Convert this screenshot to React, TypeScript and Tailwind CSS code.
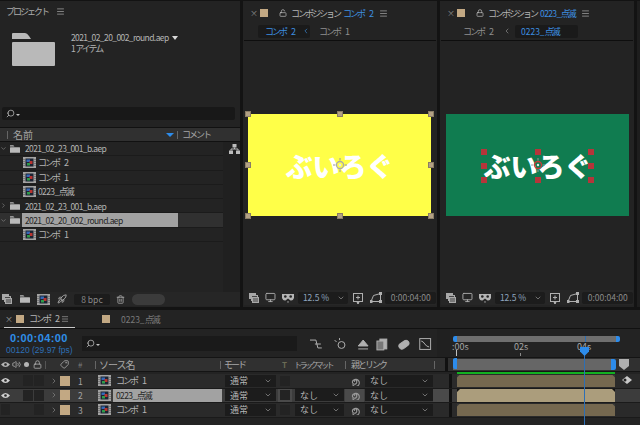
import React from "react";
import { ChevronDown, ChevronRight, ChevronLeft, Lock, LockOpen, Rocket, Trash2, Tag, Volume2, Menu, Search, Monitor } from "lucide-react";

const Jp = ({ children, className = "" }: { children: React.ReactNode; className?: string }) => (
  <span className={"text-[9px] tracking-[-2px] leading-none whitespace-pre " + className}>{children}</span>
);
const Lat = ({ children, className = "" }: { children: React.ReactNode; className?: string }) => (
  <span className={"text-[8.5px] tracking-[-0.6px] leading-none whitespace-nowrap " + className}>{children}</span>
);

const CompIcon = () => (
  <svg width="13" height="11" viewBox="0 0 13 11" className="shrink-0">
    <rect width="13" height="11" fill="#a3a3a3" />
    <rect x="2.500" y="1.500" width="8" height="8" fill="#1c2433" />
    <rect x="3.500" y="2.500" width="3.500" height="2.500" fill="#3568b8" />
    <rect x="6.500" y="4" width="3" height="3" fill="#b8332f" />
    <rect x="4" y="6" width="3" height="2.500" fill="#2f9a4a" />
    <path d="M1 2v7M12 2v7" stroke="#555" strokeDasharray="1 1" />
  </svg>
);
const Folder = ({ w = 10, h = 8 }: { w?: number; h?: number }) => (
  <svg width={w} height={h} viewBox="0 0 43 33" className="shrink-0">
    <path d="M0 1q0-1 1-1h12q2 0 4 3l2 3H0z" fill="#b9b9b9" />
    <rect x="0" y="9" width="43" height="24" rx="1" fill="#b9b9b9" />
  </svg>
);
const Flow = () => (
  <svg width="11" height="10" viewBox="0 0 11 10">
    <rect x="3.500" y="0" width="4" height="3.500" fill="#bdbdbd" />
    <rect x="0" y="6.500" width="4" height="3.500" fill="#bdbdbd" />
    <rect x="7" y="6.500" width="4" height="3.500" fill="#bdbdbd" />
    <path d="M5.500 3.500v1.500M2 6.500V5h7v1.500" stroke="#bdbdbd" fill="none" />
  </svg>
);
const Spiral = () => (
  <svg width="10" height="10" viewBox="0 0 10 10" fill="none" stroke="#9a9a9a" strokeWidth="1.100">
    <path d="M5 5.500a1 1 0 1 1 1.200-1a2.200 2.200 0 1 1-2.700-.4a3.600 3.600 0 1 1 -1 4.500" />
  </svg>
);
const FilledEye = ({ color = "#d0d0d0" }: { color?: string }) => (
  <svg width="9" height="7" viewBox="0 0 9 7" className="shrink-0">
    <path d="M0 3.500Q4.500-1.500 9 3.500 4.500 8.500 0 3.500z" fill={color} />
    <circle cx="4.500" cy="3.500" r="1.300" fill="#2a2a2a" />
  </svg>
);
const Grid2 = () => (
  <svg width="10" height="10" viewBox="0 0 10 10" fill="none" stroke="#a8a8a8" className="shrink-0">
    <rect x="0.500" y="0.500" width="6" height="5" fill="#a8a8a8" />
    <rect x="2.500" y="2.500" width="6" height="5" fill="#444" />
    <rect x="3.500" y="4.500" width="6" height="5" fill="#777" />
  </svg>
);
const Mask = () => (
  <svg width="14" height="10" viewBox="0 0 14 10" fill="#b5b5b5">
    <path d="M1 1h12v4q-1 3-3.500 2.500L7 5.500 4.500 7.500Q2 8 1 5z" />
    <circle cx="4.300" cy="3.500" r="1.300" fill="#232323" />
    <circle cx="9.700" cy="3.500" r="1.300" fill="#232323" />
    <path d="M6 8.500h2L7 10z" />
  </svg>
);
const Target = () => (
  <svg width="12" height="12" viewBox="0 0 12 12" fill="none" stroke="#b0b0b0">
    <rect x="1.500" y="1.500" width="9" height="8" />
    <path d="M6 3.500v4M4 5.500h4" />
    <path d="M5 10.500h2L6 12z" fill="#b0b0b0" />
  </svg>
);
const Persp = () => (
  <svg width="12" height="11" viewBox="0 0 12 11" fill="none" stroke="#b0b0b0">
    <path d="M1 9.500 3.500 3.500 10.500 1.500v8z" />
    <rect x="0" y="8.500" width="2" height="2" fill="#b0b0b0" />
    <rect x="9.500" y="0.500" width="2" height="2" fill="#b0b0b0" />
    <rect x="9.500" y="8.500" width="2" height="2" fill="#b0b0b0" />
  </svg>
);
const SearchDrop = () => (
  <div className="flex items-center gap-[1px]">
    <Search size={9} className="text-[#c0c0c0] -scale-x-100" />
    <div className="mt-[3px] w-0 h-0 border-l-[2px] border-r-[2px] border-t-[2px] border-l-transparent border-r-transparent border-t-[#c0c0c0]" />
  </div>
);

const TanSquare = ({ size = "w-2 h-2" }: { size?: string }) => <div className={"bg-[#c2a883] shrink-0 " + size} />;

const ProjectRow = ({ chevron, folder, children, selected }: { chevron?: "down" | "right"; folder?: boolean; children: React.ReactNode; selected?: boolean }) => (
  <div className={"h-[14.300px] flex items-center border-b border-[#1b1b1b] " + (selected ? "bg-[#303030]" : "")}>
    <div className="w-[10px] flex justify-start shrink-0">
      {chevron === "down" && <ChevronDown size={7} className="text-[#8f8f8f]" />}
      {chevron === "right" && <ChevronRight size={7} className="text-[#8f8f8f]" />}
    </div>
    {folder ? <div className="flex items-center"><Folder /><div className="w-[5px]" /></div> : <div className="flex items-center pl-[13px] gap-[2px]"><CompIcon /></div>}
    {children}
  </div>
);

const ProjectPanel = () => (
  <div className="w-[240px] bg-[#232323] flex flex-col">
    <div className="h-[19px] flex items-center pl-[6px] gap-[8px] pt-[2px]">
      <Jp className="text-[#ababab]">プロジェクト</Jp>
      <Menu size={9} className="text-[#a0a0a0]" />
    </div>
    <div className="h-[87px] flex pl-[12px] pt-[13px]">
      <Folder w={43} h={33} />
      <div className="ml-[16px] flex flex-col gap-[2px]">
        <div className="flex items-center gap-[3px] h-[9px]">
          <Lat className="text-[#b4b4b4]">2021_02_20_002_round.aep</Lat>
          <div className="w-0 h-0 border-l-[3px] border-r-[3px] border-t-[4px] border-l-transparent border-r-transparent border-t-[#d8d8d8]" />
        </div>
        <div className="h-[9px] flex items-center">
          <Lat className="text-[#b4b4b4]">1</Lat>
          <Jp className="text-[#b4b4b4]">アイテム</Jp>
        </div>
      </div>
    </div>
    <div className="h-[13px] mx-[2px] w-[233px] bg-[#181818] rounded-[2px] flex items-center pl-[4px]">
      <SearchDrop />
    </div>
    <div className="h-[7px]" />
    <div className="h-[15px] bg-[#303030] border-y border-[#111] flex items-center">
      <div className="w-[8px] h-[8px] border-r border-[#666]" />
      <span className="ml-[5px] text-[10px] text-[#a5a5a5] leading-none w-[153px]">名前</span>
      <div className="w-0 h-0 border-l-[4px] border-r-[4px] border-t-[4px] border-l-transparent border-r-transparent border-t-[#2d8ceb]" />
      <div className="ml-[3px] w-px h-[8px] bg-[#666]" />
      <Jp className="ml-[4px] text-[#a5a5a5]">コメント</Jp>
    </div>
    <div className="flex flex-1">
      <div className="w-[226px] flex flex-col">
        <ProjectRow chevron="down" folder><Lat className="text-[#b4b4b4]">2021_02_23_001_b.aep</Lat></ProjectRow>
        <ProjectRow><Jp className="ml-[2px] text-[#b4b4b4]">{"コンポ\u2002\u20022"}</Jp></ProjectRow>
        <ProjectRow><Jp className="ml-[2px] text-[#b4b4b4]">{"コンポ\u2002\u20021"}</Jp></ProjectRow>
        <ProjectRow><Lat className="ml-[2px] text-[#b4b4b4]">0223_</Lat><Jp className="text-[#b4b4b4]">点滅</Jp></ProjectRow>
        <ProjectRow chevron="right" folder><Lat className="text-[#b4b4b4]">2021_02_23_001_b.aep</Lat></ProjectRow>
        <ProjectRow chevron="down" selected folder>
          <div className="-ml-[3px] w-[156px] h-[14px] bg-[#a2a2a2] flex items-center pl-[3px]"><Lat className="text-[#262626]">2021_02_20_002_round.aep</Lat></div>
        </ProjectRow>
        <ProjectRow><Jp className="ml-[2px] text-[#b4b4b4]">{"コンポ\u2002\u20021"}</Jp></ProjectRow>
      </div>
      <div className="flex-1 bg-[#202020] pl-[6px] pt-[2px]"><Flow /></div>
    </div>
    <div className="h-[14px] mb-[1px] bg-[#262626] flex items-center">
      <div className="w-[12px] overflow-hidden flex justify-end"><Grid2 /></div>
      <div className="w-[8px]" />
      <Folder w={10} h={8} />
      <div className="w-[7px]" />
      <CompIcon />
      <div className="w-[7px]" />
      <Rocket size={10} className="text-[#b5b5b5]" />
      <div className="ml-[7px] w-[36px] h-[11px] bg-[#1c1c1c] rounded-[2px] flex items-center justify-center"><Lat className="text-[#8a8a8a] tracking-normal">8 bpc</Lat></div>
      <Trash2 size={9} className="ml-[6px] text-[#b0b0b0]" />
      <div className="ml-[7px] w-[33px] h-[11px] bg-[#3b3b3b] rounded-full" />
    </div>
  </div>
);

const CompPanel = ({ locked, title, crumb, children, wide }: { locked?: boolean; title: React.ReactNode; crumb: React.ReactNode; children: React.ReactNode; wide?: boolean }) => (
  <div className="w-[194px] bg-[#232323] flex flex-col shrink-0">
    <div className="h-[22px] flex items-center pl-[7px] pt-[2px]">
      <span className="text-[8px] leading-none text-[#8a8a8a] w-[10px]">×</span>
      <TanSquare size="w-[8px] h-[8px]" />
      <div className="ml-[11px] w-[8px] flex justify-center">
        {locked ? <Lock size={8} className="text-[#c4c4c4]" /> : <LockOpen size={8} className="text-[#c4c4c4]" />}
      </div>
      <Jp className="ml-[4px] text-[#b4b4b4]">コンポジション</Jp>
      <div className="ml-[3px] flex items-center">{title}</div>
      <Menu size={9} className={(wide ? "ml-[6px]" : "ml-[7px]") + " text-[#a0a0a0]"} />
    </div>
    <div className="h-[17px] flex items-center pb-[1px]">{crumb}</div>
    <div className="h-px bg-[#0e0e0e] mx-[1px]" />
    {children}
    <div className="h-[15px] mx-[1px] mb-[2px] mt-auto bg-[#262626] flex items-center pl-[5px]">
      <Grid2 />
      <Monitor size={11} className="ml-[6px] text-[#b0b0b0]" />
      <div className="ml-[5px]"><Mask /></div>
      <div className="ml-[3px] w-[51px] h-[12px] bg-[#1c1c1c] rounded-[2px] flex items-center pl-[5px] pr-[3px] justify-between">
        <Lat className="text-[#8fa6bf] tracking-normal">12.5 %</Lat>
        <ChevronDown size={8} className="text-[#999]" />
      </div>
      <div className="ml-[4px]"><Target /></div>
      <div className="ml-[6px]"><Persp /></div>
      <div className="ml-[3px] w-[51px] h-[12px] bg-[#1c1c1c] rounded-[2px] flex items-center justify-center"><Lat className="text-[#8a8a8a] tracking-normal">0:00:04:00</Lat></div>
    </div>
  </div>
);

const Anchor = ({ cross }: { cross: string }) => (
  <svg width="14" height="14" viewBox="0 0 14 14" className="absolute left-1/2 top-1/2 -translate-x-1/2 -translate-y-1/2" fill="none" stroke={cross}>
    <circle cx="7" cy="7" r="3.500" strokeWidth="1.300" />
    <circle cx="7" cy="7" r="1.200" fill="#e8e8e8" stroke="none" />
    <path d="M7 0v2.500M7 11.500V14M0 7h2.500M11.500 7H14" stroke="#9a9a9a" />
  </svg>
);
const Comp = ({ bg, cross }: { bg: string; cross: string }) => (
  <div className={"relative w-[183px] h-[102px] flex items-center justify-center " + bg}>
    <span className="text-[27px] font-black text-white leading-none whitespace-nowrap">ぶいろぐ</span>
    <Anchor cross={cross} />
  </div>
);
const Handles = ({ cls, xs, ys }: { cls: string; xs: string[]; ys: string[] }) => (
  <>
    {ys.map((y, j) => xs.map((x, i) => (j === 1 && i === 1 ? null : <div key={x + y} className={"absolute w-[6px] h-[6px] -translate-x-1/2 -translate-y-1/2 " + cls} style={{ left: x, top: y }} />)))}
  </>
);

const SelectBox = ({ w, label }: { w: string; label: string }) => (
  <div className={"h-[12px] bg-[#1c1c1c] flex items-center justify-between pl-[5px] pr-[4px] shrink-0 " + w}>
    <span className="text-[9px] leading-none text-[#b4b4b4]">{label}</span>
    <ChevronDown size={8} className="text-[#9a9a9a]" />
  </div>
);

const Bar = ({ cls, mark }: { cls: string; mark: string }) => (
  <div className={"relative w-[158px] h-[12.500px] shrink-0 " + cls}>
    <div className={"absolute left-0 top-0 w-[3px] h-[3px] [clip-path:polygon(0_0,100%_0,0_100%)] " + mark} />
    <div className={"absolute right-0 top-0 w-[3px] h-[3px] [clip-path:polygon(0_0,100%_0,100%_100%)] " + mark} />
  </div>
);

const TLRow = ({ n, name, selected, eye, cell1, track, barCls, mark }: { n: string; name: React.ReactNode; selected?: boolean; eye?: boolean; cell1?: boolean; track?: boolean; barCls: string; mark: string }) => (
  <div className={"h-[14.500px] flex items-center " + (selected ? "bg-[#3c3c3c]" : "bg-[#2a2a2a]") + " border-b border-[#1a1a1a]"}>
    <div className="w-[10px] flex justify-center shrink-0">{eye ? <FilledEye /> : <div className="w-[9px] h-[11px] bg-[#232323]" />}</div>
    <div className="w-[13px] shrink-0" />
    <div className={"w-[10px] h-[11px] shrink-0 " + (cell1 ? "bg-[#232323]" : "")} />
    <div className="w-px shrink-0" />
    <div className="w-[10px] h-[11px] bg-[#232323] shrink-0" />
    <div className="w-[6px] shrink-0" />
    <ChevronRight size={8} className="text-[#8a8a8a] shrink-0" />
    <div className="w-[2px] shrink-0" />
    <div className="w-[10px] h-[10px] bg-[#c2a883] shrink-0" />
    <div className="w-[8px] shrink-0" />
    <span className="w-[20px] shrink-0 text-[8.500px] leading-none text-[#a5a5a5]">{n}</span>
    <CompIcon />
    <div className={"ml-[2px] w-[109px] h-[13px] flex items-center pl-[3px] shrink-0 " + (selected ? "bg-[#a2a2a2]" : "")}>{name}</div>
    <div className="w-[3px] shrink-0" />
    <SelectBox w="w-[51px]" label="通常" />
    <div className="w-[2px] shrink-0" />
    <div className={"w-[14px] h-[13px] flex items-center justify-center shrink-0 " + (selected ? "bg-[#4a4a4a]" : "")}><div className="w-[10px] h-[10px] bg-[#232323]" /></div>
    <div className="w-[3px] shrink-0" />
    {track ? <SelectBox w="w-[49px]" label="なし" /> : <div className="w-[49px] shrink-0" />}
    <div className={"ml-[1px] w-[19px] h-[13px] flex items-center justify-center shrink-0 " + (selected ? "bg-[#4a4a4a]" : "")}><Spiral /></div>
    <div className="w-px shrink-0" />
    <SelectBox w="w-[68px]" label="なし" />
    <div className={"w-[16px] h-full shrink-0 " + (selected ? "bg-[#4a4a4a]" : "")} />
    <div className="w-[3px] h-full bg-[#111] shrink-0" />
    <div className="w-[5px] shrink-0" />
    <Bar cls={barCls} mark={mark} />
    <div className="flex-1" />
  </div>
);

export default function App() {
  return (
    <div className="relative w-[640px] h-[425px] bg-[#131313] overflow-hidden flex flex-col pt-[1px]" style={{ fontFamily: '"Noto Sans CJK JP","Liberation Sans",sans-serif' }}>
      <div className="h-[306px] flex gap-[3px] shrink-0">
        <ProjectPanel />
        <CompPanel
          title={<Jp className="text-[#3d8fe0]">{"コンポ\u2002\u20022"}</Jp>}
          crumb={
            <div className="flex items-center pl-[15px]">
              <div className="w-[52px] h-[13px] bg-[#1a1a1a] rounded-[2px] flex items-center pl-[7px]">
                <Jp className="text-[#3d8fe0] w-[39px]">{"コンポ\u2002\u20022"}</Jp>
                <ChevronLeft size={8} className="text-[#3d8fe0]" />
              </div>
              <Jp className="ml-[9px] text-[#8f8f8f]">{"コンポ\u2002\u20021"}</Jp>
            </div>
          }
        >
          <div className="pl-[5px] pt-[73px] relative">
            <div className="relative w-[183px]">
              <Comp bg="bg-[#ffff48]" cross="#a9a9a9" />
              <Handles cls="bg-[#b3a184] border border-[#8a7d66]" xs={["0px", "91.500px", "183px"]} ys={["0px", "51px", "102px"]} />
            </div>
          </div>
        </CompPanel>
        <CompPanel
          locked
          wide
          title={<><Lat className="text-[#3d8fe0]">0223_</Lat><Jp className="text-[#3d8fe0]">点滅</Jp></>}
          crumb={
            <div className="flex items-center pl-[23px]">
              <Jp className="text-[#8f8f8f] w-[39px]">{"コンポ\u2002\u20022"}</Jp>
              <ChevronLeft size={8} className="ml-[1px] text-[#8f8f8f]" />
              <div className="ml-[4px] w-[63px] h-[13px] bg-[#1a1a1a] rounded-[2px] flex items-center pl-[6px]">
                <Lat className="text-[#3d8fe0] tracking-normal">0223_</Lat><Jp className="text-[#3d8fe0]">点滅</Jp>
              </div>
            </div>
          }
        >
          <div className="pl-[6px] pt-[73px] relative">
            <div className="relative w-[183px]">
              <Comp bg="bg-[#107c50]" cross="#c83a3a" />
              <div className="absolute left-[38px] top-[38px] w-[107px] h-[28px]">
                <Handles cls="bg-[#b5353a]" xs={["0px", "53.500px", "107px"]} ys={["0px", "14px", "28px"]} />
              </div>
            </div>
          </div>
        </CompPanel>
        <div className="flex-1 bg-[#1e1e1e]" />
      </div>

      {/* timeline */}
      <div className="mt-[3px] flex-1 bg-[#232323] flex flex-col min-h-0">
        <div className="h-[19px] flex items-center border-b border-[#111] relative">
          <div className="ml-[4px] w-[71px] h-[18px] flex items-center pl-[1px] border-b-[1px] border-[#c8c8c8] shrink-0">
            <span className="text-[8px] leading-none text-[#9a9a9a] w-[11px]">×</span>
            <TanSquare />
            <Jp className="ml-[5px] w-[30px] text-[#b4b4b4]">{"コンポ\u2002\u20022"}</Jp>
            <Menu size={8} className="ml-[2px] text-[#a0a0a0]" />
          </div>
          <div className="ml-[27px]"><TanSquare /></div>
          <Lat className="ml-[11px] text-[#7a7a7a] tracking-normal">0223_</Lat><Jp className="text-[#7a7a7a]">点滅</Jp>
        </div>
        <div className="h-[28px] flex">
          <div className="w-[82px] pl-[6px] pt-[4px] flex flex-col gap-[2px] shrink-0 font-['Liberation_Sans']">
            <span className="ml-[4px] text-[11px] font-bold leading-[11px] text-[#2f8fe8] tracking-[0.4px] whitespace-nowrap">0:00:04:00</span>
            <span className="text-[8.500px] leading-[9px] text-[#2d6fb5] whitespace-nowrap">00120 (29.97 fps)</span>
          </div>
          <div className="w-[215px] h-[15px] mt-[7px] bg-[#1a1a1a] flex items-center pl-[4px] shrink-0">
            <SearchDrop />
          </div>
          <div className="w-[140px] flex items-center pt-[1px] shrink-0 text-[#b0b0b0]">
            <svg width="130" height="14" viewBox="0 0 130 14" className="ml-[12px]" fill="none" stroke="#b0b0b0">
              <path d="M1 3h6M6 7h6M9 11h4M7 3l2 8" />
              <circle cx="33" cy="8" r="3.500" /><path d="M26 3l2 2M31 1v2" />
              <path d="M50 9l5-6 5 6zM50 12h10" fill="#b0b0b0" />
              <rect x="72" y="2" width="7" height="10" fill="#b0b0b0" /><rect x="69" y="4" width="7" height="9" fill="#777" />
              <rect x="91" y="5" width="11" height="6" rx="3" transform="rotate(-35 96 8)" fill="#b0b0b0" />
              <rect x="112.500" y="1.500" width="11" height="11" /><path d="M114 4c3 0 4 6 8 6" />
            </svg>
          </div>
          <div className="w-[13px] bg-[#202020]" />
          <div className="flex-1 flex flex-col pl-[3px]">
            <div className="pt-[7px] h-[13px] flex items-center">
              <div className="w-[4px] h-[6px] bg-[#2d8ceb] rounded-l-[2px]" />
              <div className="w-[159px] h-[6px] bg-[#6f6f6f] relative"><div className="absolute left-[128px] top-0 w-px h-[6px] bg-[#2d6fb5]" /></div>
              <div className="w-[4px] h-[6px] bg-[#2d8ceb] rounded-r-[2px]" />
            </div>
            <div className="relative h-[15px] w-[167px]">
              <span className="absolute left-[-1px] top-[0px] text-[9px] leading-[10px] text-[#a5a5a5]">:00s</span>
              <span className="absolute left-[61px] top-[0px] text-[9px] leading-[10px] text-[#a5a5a5]">02s</span>
              <span className="absolute left-[124px] top-[0px] text-[9px] leading-[10px] text-[#a5a5a5]">04s</span>
              <div className="absolute left-[67px] top-[11px] w-px h-[3px] bg-[#8a8a8a]" />
              <div className="absolute left-[3px] top-[8px] w-px h-[6px] bg-[#c0c0c0]" />
            </div>
          </div>
        </div>
        <div className="h-[15px] flex items-center bg-[#303030] border-y border-[#141414]">
          <div className="w-[60px] flex items-center gap-[2px] pl-[1px] shrink-0">
            <FilledEye color="#b5b5b5" />
            <Volume2 size={9} className="text-[#b5b5b5]" />
            <div className="ml-[1px] w-[5px] h-[5px] rounded-full bg-[#b5b5b5]" />
            <Lock size={9} className="ml-[2px] text-[#b5b5b5]" />
            <div className="ml-[1px] w-px h-[8px] bg-[#555]" />
          </div>
          <Tag size={9} className="-scale-x-100 text-[#b5b5b5]" />
          <span className="ml-[9px] w-[17px] text-[8px] leading-none text-[#777]">#</span>
          <div className="w-px h-[8px] bg-[#666]" />
          <span className="ml-[3px] w-[121px] text-[10px] tracking-[-1px] leading-none text-[#a8a8a8]">ソース名</span>
          <div className="w-px h-[8px] bg-[#666]" />
          <Jp className="ml-[3px] w-[58px] text-[#a8a8a8]">モード</Jp>
          <span className="text-[8px] font-bold leading-none text-[#6b6b55]">T</span>
          <span className="ml-[7px] w-[51px] text-[8px] tracking-[-2.600px] leading-none whitespace-pre text-[#a8a8a8]">トラックマット</span>
          <div className="w-px h-[8px] bg-[#666]" />
          <Jp className="ml-[5px] w-[83px] text-[#a8a8a8]">親とリンク</Jp>
          <div className="w-px h-[8px] bg-[#666]" />
          <div className="w-[10px]" />
          <div className="w-[3px] h-full bg-[#111]" />
          <div className="ml-[5px] w-[158px] h-[11px] bg-[#666]" />
          <div className="w-[5px] h-[11px] bg-[#2d8ceb] rounded-r-[2px] mr-[3px]" />
          <svg width="10" height="11" viewBox="0 0 10 11"><path d="M0 0h10v7l-5 4-5-4z" fill="#b0b0b0" /></svg>
        </div>
        <div className="h-[2px] flex bg-[#232323]"><div className="ml-[457px] w-[158px] bg-[#12b020]" /></div>
        <TLRow n="1" eye cell1 name={<Jp className="text-[#b4b4b4]">{"コンポ\u2002\u20021"}</Jp>} barCls="bg-[#75684f]" mark="bg-[#3a3a3a]" />
        <TLRow n="2" eye cell1 selected track name={<><Lat className="text-[#262626]">0223_</Lat><Jp className="text-[#262626]">点滅</Jp></>} barCls="bg-[#ab9d7c]" mark="bg-[#111]" />
        <TLRow n="3" track name={<Jp className="text-[#b4b4b4]">{"コンポ\u2002\u20021"}</Jp>} barCls="bg-[#75684f]" mark="bg-[#3a3a3a]" />
      </div>

      {/* overlays: playhead and markers */}
      <div className="absolute left-[584px] top-[347px] bottom-0 w-px bg-[#2d6fb5]" />
      <div className="absolute left-[580px] top-[347px] w-[9px] h-[9px] bg-[#2d8ceb] [clip-path:polygon(0_0,100%_0,100%_50%,50%_100%,0_50%)]" />
      <div className="absolute left-[453px] top-[358px] w-[4px] h-[11px] bg-[#2d8ceb] rounded-l-[2px]" />
      <svg width="12" height="10" viewBox="0 0 12 10" className="absolute left-[621px] top-[375px]">
        <path d="M1 5 6 1l5 4-5 4z" fill="#c8c8c8" />
        <circle cx="4" cy="5" r="1.500" fill="#232323" />
      </svg>
    </div>
  );
}
